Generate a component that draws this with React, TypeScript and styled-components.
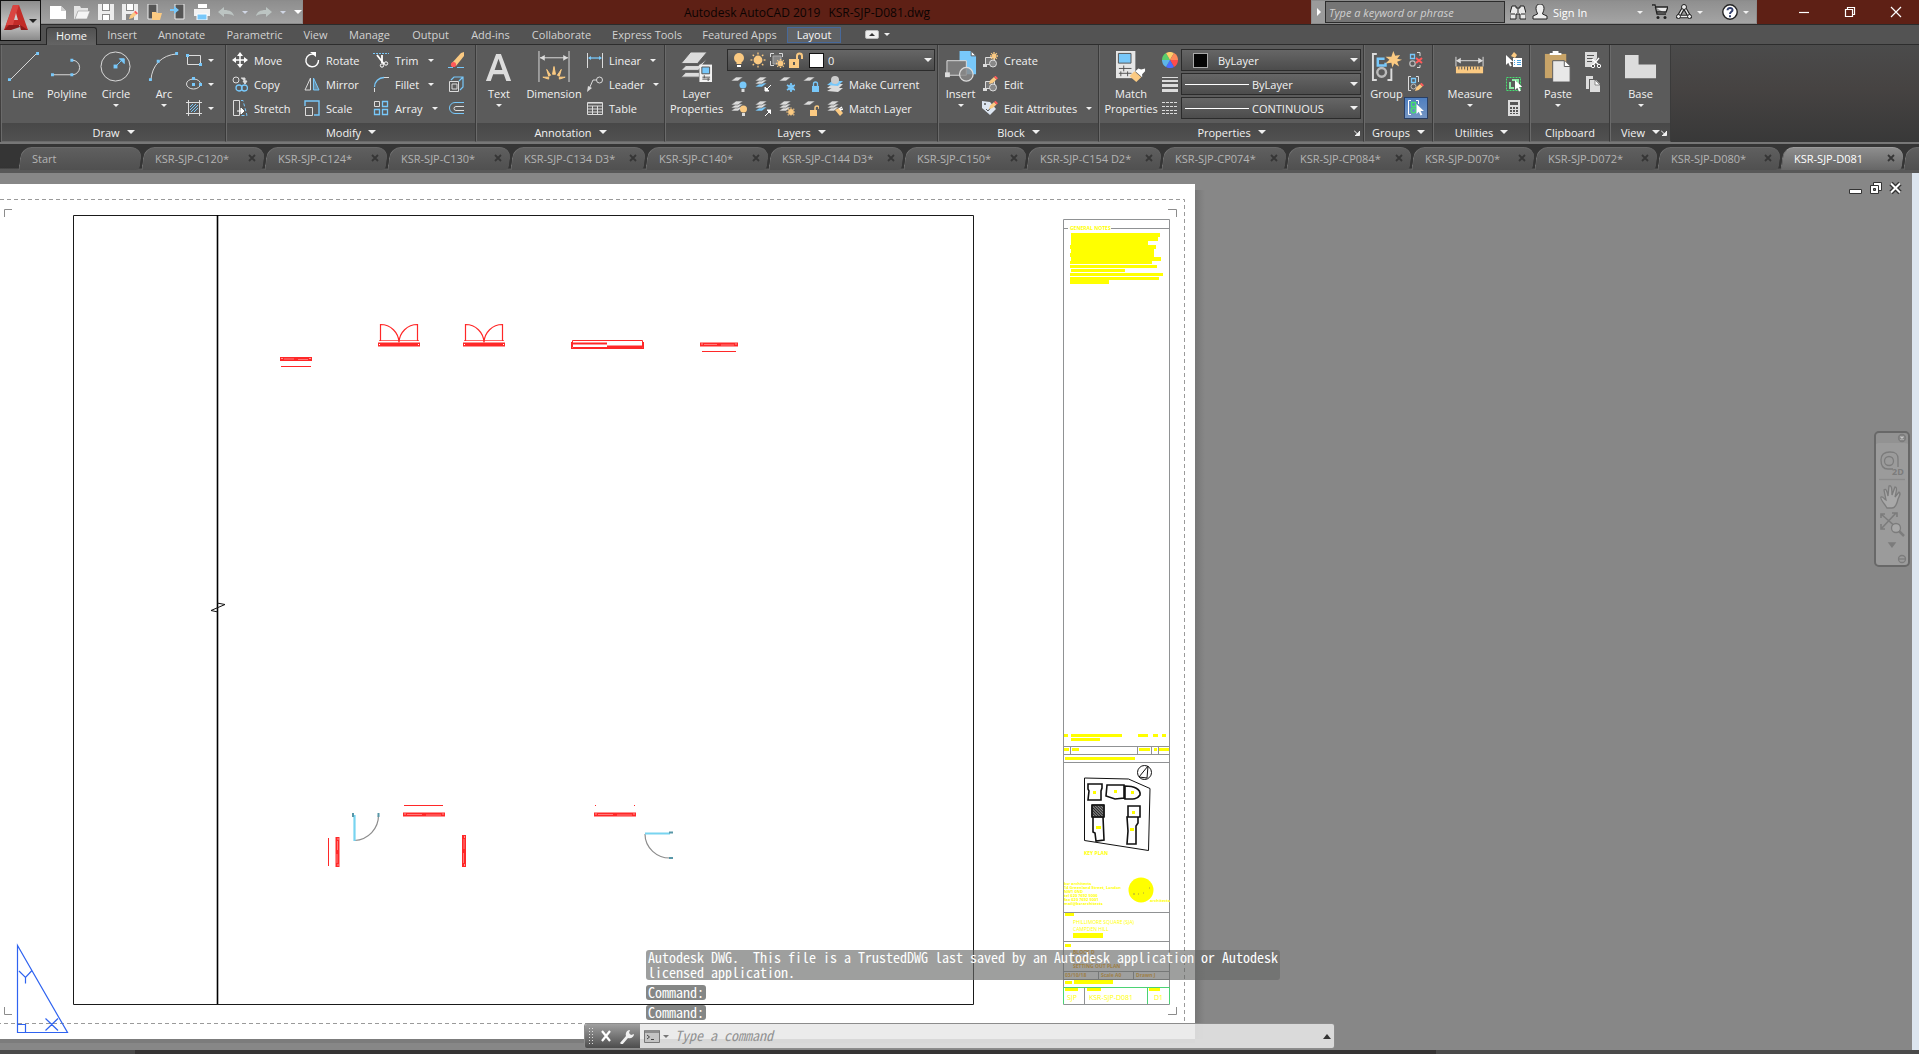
import React from 'react';
import styled, { createGlobalStyle, css } from 'styled-components';

const L = '#dcdcdc';
const B = '#78c8fa';
const O = '#fbca82';
const R = '#ff5a5a';
const UI = '"Open Sans", "Noto Sans", sans-serif';
const MONO = '"Noto Sans Mono CJK SC", "DejaVu Sans Mono", "Liberation Mono", monospace';

const Global = createGlobalStyle`
  *, *::before, *::after { box-sizing: border-box; }
  html, body, #root { height: 100%; }
  body { margin: 0; overflow: hidden; background: #8a8a8a; font-family: ${UI}; font-size: 11px; color: #f2f2f2; }
  button, input, select { font: inherit; color: inherit; }
  button { border: 0; padding: 0; background: none; }
  svg { display: block; flex: none; }
`;

/* ---------- icons ---------- */

const sheets = (x: number, y: number, n: number, last = L) => (
  <>
    {Array.from({ length: n }, (_, i) => {
      const k = n - 1 - i;
      return <path key={k} d={`M${x} ${y + 5 + k * 3}l5-4h7l-5 4z`} fill={k === n - 1 ? last : L} stroke="#5b5b5b" strokeWidth=".6" />;
    })}
  </>
);
const pencil = (x: number, y: number) => (
  <g transform={`translate(${x} ${y})`}>
    <path d="M0 8l1.2-3.5L5 1l2.5 2.5L3.700 7z" fill={O} />
    <path d="M5 1l1.500-1.300 2.500 2.600L7.500 3.500z" fill={R} />
  </g>
);
const sun = (x: number, y: number, r: number) => (
  <g stroke={O} strokeWidth="1.300" fill={O}>
    <circle cx={x} cy={y} r={r * 0.5} />
    {[0, 45, 90, 135, 180, 225, 270, 315].map(a => (
      <path key={a} d={`M${x} ${y - r * 0.75}V${y - r}`} transform={`rotate(${a} ${x} ${y})`} />
    ))}
  </g>
);
const arrowCursor = (x: number, y: number) => (
  <path transform={`translate(${x} ${y})`} d="M0 0v10l2.300-2.200 1.700 3.700 1.800-.8-1.700-3.600h3.300z" fill="#fff" />
);
const shapes = (
  <>
    <path d="M3.500 5.500h9v7h-9z" fill="#777" stroke={L} />
    <path d="M1 12h4v3H1z" fill={L} />
    <circle cx="11" cy="11.500" r="3.500" fill="#888" stroke={L} />
  </>
);

const ART: Record<string, React.ReactNode> = {
  line: <><path d="M3 30L30 3" stroke={L} /><path d="M1 28h3v3H1zM30 1h3v3h-3z" fill={B} /></>,
  polyline: <><path d="M2 24.500h20a7 7 0 0 0 0-15" stroke={L} fill="none" /><path d="M0 23h3v3H0zM20 23h3v3h-3zM20 8h3v3h-3z" fill={B} /></>,
  circle: <><circle cx="16" cy="16" r="15" stroke={L} fill="none" /><path d="M16 16l7-7M20 8h5v5z" stroke={B} fill={B} /><path d="M14 14h4v4h-4z" fill={B} /></>,
  arc: <><path d="M3 30C4 15 14 4 30 3" stroke={L} fill="none" /><path d="M1 28h3v3H1zM9 9h3v3H9zM28 1h3v3h-3z" fill={B} /></>,
  rect: <><path d="M1.500 3.500h13v9h-13z" stroke={L} fill="none" /><path d="M0 2h3v3H0zM13 11h3v3h-3z" fill={B} /></>,
  ellipse: <><ellipse cx="7.500" cy="8" rx="7" ry="5" stroke={L} fill="none" /><path d="M6 7h3v3H6zM6 1h3v3H6zM13 7h3v3h-3z" fill={B} /></>,
  hatch: <><path d="M2.500 0v16M13.500 0v16M0 2.500h16M0 13.500h16" stroke={L} /><path d="M4 7l3-3M4 10l6-6M5 12l7-7M8 12l4-4" stroke={B} /></>,
  move: <><path d="M8 2v12M2 8h12" stroke="#fff" strokeWidth="1.500" /><path d="M8 0l3 4H5zM8 16l3-4H5zM0 8l4-3v6zM16 8l-4-3v6z" fill="#fff" /></>,
  copy: <><circle cx="4" cy="4" r="3" stroke={L} fill="none" /><path d="M9 2h4v4M11 5h4l-2 3z" stroke={L} fill={L} /><circle cx="7" cy="12" r="3" stroke={B} fill="none" strokeWidth="1.300" /><circle cx="12.500" cy="12" r="3" stroke={B} fill="none" strokeWidth="1.300" /></>,
  stretch: <><path d="M1.500.5h6v15h-6z" stroke={L} fill="none" /><path d="M9 .5h2l4 15H9" stroke={B} fill="none" strokeDasharray="3 2" /><path d="M5 11h5M9 8l3 3-3 3z" stroke="#fff" fill="#fff" /></>,
  rotate: <><path d="M10.500 2.600A6.300 6.300 0 1 0 14.500 8" stroke="#fff" fill="none" strokeWidth="1.400" /><path d="M6 0h6v5z" fill="#fff" /></>,
  mirror: <><path d="M6.500 2v12H1z" stroke={L} fill="none" /><path d="M9.500 2v12H15z" stroke={B} fill={B} fillOpacity=".45" /></>,
  scale: <><path d="M1 6V1h14v14h-5" stroke={B} fill="none" strokeWidth="1.400" /><path d="M1.500 7.500h7v8h-7z" stroke={L} fill="none" /></>,
  trim: <><path d="M0 1.500h16" stroke={B} strokeDasharray="2 1" /><path d="M4 3l7 9M9 3l0 8" stroke="#fff" strokeWidth="1.800" /><circle cx="9" cy="13.500" r="1.700" stroke="#fff" fill="none" /><circle cx="13" cy="11.500" r="1.700" stroke="#fff" fill="none" /></>,
  fillet: <><path d="M1.500 16v-4M11 1.500h5" stroke={L} /><path d="M1.500 11A9.500 9.500 0 0 1 11 1.500" stroke={B} fill="none" strokeWidth="1.300" /></>,
  array: <><path d="M1.500 1.500h5v5h-5z" stroke={L} fill="none" /><path d="M9.500 1.500h5v5h-5zM1.500 9.500h5v5h-5zM9.500 9.500h5v5h-5z" stroke={B} fill="none" strokeWidth="1.300" /></>,
  erase: <><path d="M0 15.500h5M9 15.500h7" stroke={B} /><path d="M4 11L13 1l3-1v4L8 14z" fill={O} /><circle cx="5.500" cy="12.500" r="2.600" fill={R} /></>,
  explode: <><path d="M1.500 5.500h9v10h-9zM4 8h5v5H4z" stroke={L} fill="none" /><path d="M3 4l3-3h9v10l-3 3M11 5l4-4" stroke={B} fill="none" strokeWidth="1.200" /></>,
  offset: <><path d="M16 2.500H7a5.500 5.500 0 0 0 0 11h9" stroke={B} fill="none" /><path d="M16 6.500H8a2 2 0 0 0 0 4h8" stroke={L} fill="none" /></>,
  text: <path d="M3 31L13.500 3h5L29 31h-5l-2.500-7h-11L8 31zM12 19.500h8L16 8z" fill={L} fillRule="evenodd" />,
  dimension: <><path d="M1 0v32M32 0v32M2 7h29" stroke={L} /><path d="M2 7l5-3v6zM31 7l-5-3v6z" fill={L} /><path d="M16.500 16l1.500 8h-3zM9 19l4 6-2 1zM24 19l-4 6 2 1zM5 27l6 0v2zM28 27h-6v2z" fill={O} stroke={O} /></>,
  linear: <><path d="M.5 1v15M15.500 1v15" stroke={L} /><path d="M2 6h12" stroke={B} strokeWidth="1.300" /><path d="M1 6l3-2v4zM15 6l-3-2v4z" fill={B} /></>,
  leader: <><circle cx="12.500" cy="4" r="3" stroke={L} fill="none" /><path d="M9.500 4H6L2 13" stroke={L} fill="none" /><path d="M0 16l1-6 4 2z" fill={L} /></>,
  table: <><path d="M.5 2.500h15v12H.5zM.5 6h15M.5 9h15M.5 12h15M5.500 6v8M10.500 6v8" stroke={L} fill="none" /><path d="M1 2h14v2H1z" fill={L} opacity=".6" /></>,
  layers: <><path d="M0 13L10 1h17L17 13zM0 20l5-5h13l9-7-9 12zM0 27l5-5h14v5z" fill={L} stroke="#5b5b5b" /><path d="M19 14h13v18H19z" fill="#f2f2f2" /><path d="M21.500 16.500h8v7h-8z" fill={B} stroke="#555" /><path d="M22 27h8M22 29h8M24 25v3M28 28v3" stroke="#555" /></>,
  layOff: <>{sheets(0, 0, 1)}<circle cx="12" cy="9" r="3.500" fill={B} /><path d="M10.500 13h3v3h-3z" fill={L} /></>,
  layIso: <>{sheets(0, 0, 3, B)}<path d="M16 9l-5 5M10 11v4h4z" stroke="#fff" fill="#fff" /></>,
  layFreeze: <>{sheets(0, 0, 1)}<path d="M12 7v9M8 9l8 5M16 9l-8 5" stroke={B} strokeWidth="1.700" /><circle cx="12" cy="11.500" r="2.700" stroke={B} fill="none" /></>,
  layLock: <>{sheets(0, 0, 1)}<path d="M9 10h7v6H9z" fill={B} /><path d="M10.500 10V8a2 2 0 0 1 4 0v2" stroke={B} fill="none" strokeWidth="1.300" /></>,
  makeCurrent: <><path d="M0 15l5-3h11l-5 4zM0 12l5-4h11l-5 5z" fill={L} /><path d="M0 9l5-4h11l-5 5z" fill={B} /><circle cx="8" cy="4" r="4" fill="#ccc" /></>,
  layOn: <>{sheets(0, 0, 3)}<circle cx="12.500" cy="9" r="3.500" fill={O} /><path d="M11 13h3v3h-3z" fill={L} /></>,
  layUniso: <>{sheets(0, 0, 3, B)}<path d="M10 16l5-5M12 10h4v4z" stroke="#fff" fill="#fff" /></>,
  layThaw: <>{sheets(0, 0, 3)}{sun(12, 12, 4.5)}</>,
  layUnlock: <>{sheets(0, 0, 1)}<path d="M7 10h7v6H7z" fill={O} /><path d="M12 10V8a2 2 0 0 1 4 0v1" stroke={O} fill="none" strokeWidth="1.500" /></>,
  matchLayer: <>{sheets(0, 0, 3)}<path d="M8 10l4-2 4 5-3 3z" fill={O} /><path d="M12 9l3-2M13 10l3-1" stroke="#fff" strokeWidth="1.500" /></>,
  bulb: <><circle cx="8" cy="6" r="5" fill={O} /><path d="M5.500 10h5v2h-5z" fill={O} /><path d="M6 13h4v2H6z" fill="#fff" /></>,
  sun: sun(8, 8, 7.5),
  vp: <><path d="M1.500 5V1.500H5M10 1.500h3.500V5M1.500 9v4.500H5" stroke={L} fill="none" /><path d="M4 4h8v8H4z" fill="#858585" stroke="#aaa" />{sun(11.5, 11.5, 4.5)}</>,
  unlock: <><path d="M1 7h10v9H1z" fill={O} /><path d="M9 8V4a2.500 2.500 0 0 1 5 0v3" stroke={O} strokeWidth="2" fill="none" /><path d="M5 10h2v3H5z" fill="#555" /></>,
  insert: <><path d="M15 0h12l5 5v19H15z" fill={B} /><path d="M27 0l5 5h-5z" fill="#fff" stroke="#5b5b5b" /><path d="M2 10h20v15H2z" fill="#7b7b7b" stroke={L} /><path d="M0 22h5v5H0z" fill={L} /><circle cx="22" cy="24" r="7" fill="#888" fillOpacity=".8" stroke={L} strokeWidth="1.300" /></>,
  create: <>{shapes}{sun(12, 4, 4)}</>,
  edit: <>{shapes}{pencil(7, 0)}</>,
  editAttr: <><path d="M0 1l8 1 6 7-6 6-8-7z" fill="#dde6f2" /><circle cx="3" cy="4" r="1" fill="#555" /><path d="M4 9l2 2 4-5" stroke="#555" fill="none" />{pencil(7, 1)}</>,
  matchProps: <><path d="M1 0h20v28H1z" fill="#e6e6e6" /><path d="M3.500 2.500h13v10h-13z" fill={B} stroke="#555" /><path d="M4 18h13M4 23h13M9 15v6M6 21v5M13 21v5" stroke="#555" /><path d="M15 26l5-5 7 6-5 5z" fill={O} /><path d="M21 21l3-3 3 1 4-1v3l-3 3v3z" fill="#fff" /></>,
  wheel: <>{['#5acd6c', '#ffcf6b', '#ff8a5a', '#ff4c4c', '#4a6dff', '#5db6e8'].map((c, i) => <path key={c} d="M8 8V0a8 8 0 0 1 6.930 4z" fill={c} transform={`rotate(${i * 60 - 90} 8 8)`} />)}</>,
  weights: <path d="M0 1h16v1H0zM0 4h16v2H0zM0 8h16v3H0zM0 13h16v3H0z" fill={L} />,
  types: <path d="M0 2.500h16M0 6.500h16M0 10.500h16M0 13.500h16" stroke={L} strokeDasharray="3 1" />,
  group: <><path d="M6 3H2v27h4M17 30h4V18" stroke={L} strokeWidth="2" fill="none" /><path d="M14 8H7v7h8v-3" stroke={B} strokeWidth="2.500" fill="none" /><circle cx="11" cy="22" r="4.500" stroke="#bbb" strokeWidth="2.500" fill="none" /><path d="M23 0l2 5 5-1-3 4 5 1-5 2 2 5-5-3-2 4-1-5-6 1 4-4-4-3h6z" fill={O} /></>,
  ungroup: <><path d="M2.500 2.500h4v4h-4z" stroke={B} fill="none" strokeWidth="1.300" /><circle cx="4.500" cy="11.500" r="2.700" stroke="#bbb" fill="none" strokeWidth="1.300" /><path d="M9 .5h3V4M9 15.500h3V13" stroke={L} fill="none" /><path d="M8 6l6 5M14 6l-6 5" stroke={R} strokeWidth="2" /></>,
  groupEdit: <><path d="M3 .5H.500v14H3M8 .5h2.500V6" stroke={L} fill="none" /><path d="M3.500 2.500h4v4h-4z" stroke={B} fill="none" strokeWidth="1.300" /><circle cx="5.500" cy="10.500" r="2.500" stroke="#bbb" fill="none" />{pencil(7, 7)}</>,
  groupSel: <><path d="M3 .5H.500v14H3M8 .5h2.500V4" stroke="#fff" fill="none" /><path d="M3.500 2.500h4v4h-4z" stroke="#45e070" fill="none" strokeWidth="1.300" /><circle cx="5.500" cy="10.500" r="2.300" stroke="#45e070" fill="none" strokeWidth="1.300" />{arrowCursor(8.5, 4)}</>,
  measure: <><path d="M2 6v10M30 6v10M3 10h26" stroke={L} /><path d="M2 10l5-3v6zM30 10l-5-3v6z" fill={L} /><path d="M2 16h28v7H2z" fill={O} /><path d="M5 16v3M8 16v3M11 16v3M14 16v4M17 16v3M20 16v3M23 16v3M26 16v3" stroke="#555" /></>,
  quick: <>{arrowCursor(0, 3)}<path d="M8 0l3 3-2 3-4-2z" fill={O} /><path d="M7 6h9v9H7z" fill="#fff" /><path d="M8 8.500h1M11 8.500h4M8 10.500h1M11 10.500h4M8 12.500h1M11 12.500h4" stroke="#4aa3e0" /></>,
  selectAll: <><path d="M.5 1.500h14v13H.5z" stroke="#45e070" strokeDasharray="2 1" fill="none" /><path d="M6 4h6v4M4 6v6h4" stroke="#8be8a4" strokeWidth="2" fill="none" />{arrowCursor(9, 4)}</>,
  calc: <><path d="M2 0h12v16H2z" fill={L} /><path d="M4 2h8v3H4zM4 7h2v2H4zM7 7h2v2H7zM10 7h2v2h-2zM4 10h2v2H4zM7 10h2v2H7zM10 10h2v2h-2zM4 13h2v1H4zM7 13h2v1H7zM10 13h2v1h-2z" fill="#555" /></>,
  paste: <><path d="M3 3h22v25H3z" fill="#c8a468" /><path d="M8 4V2h3V0h6v2h3v2z" fill="#fff" /><path d="M11 10h12l6 6v16H11z" fill="#e8e8e8" stroke="#5b5b5b" /><path d="M23 10v6h6" fill="#fff" stroke="#5b5b5b" /></>,
  cut: <><path d="M0 0h12v6l-4 9H0z" fill={L} /><path d="M2 3.500h7M2 6.500h6M2 9.500h5" stroke="#555" /><path d="M7 7l7 6M14 6l-6 7" stroke="#fff" strokeWidth="1.300" /><circle cx="8" cy="14" r="1.700" fill="#555" stroke="#fff" /><circle cx="14" cy="14" r="1.700" fill="#555" stroke="#fff" /></>,
  copyClip: <><path d="M1 0h7v3H4v10H1z" fill={L} /><path d="M5 4h6l4 4v8H5z" fill={L} /><path d="M10 4l5 5h-5z" fill="#fff" stroke="#666" strokeWidth=".7" /></>,
  base: <path d="M0 4h14v10h18v14H0z" fill={L} />,
  newDoc: <><path d="M0 2h11l5 5v8H0z" fill="#fff" /><path d="M11 2l5 5h-5z" fill="#ccc" /></>,
  open: <><path d="M0 2h6l1 2h7v3H4L1 15H0z" fill="#e4e4e4" /><path d="M4 7h12l-3 8H1z" fill="#f4f4f4" stroke="#999" strokeWidth=".6" /></>,
  save: <><path d="M0 0h16v16H0z" fill="#ececec" /><path d="M4 0h8v7H4zM4 10h8v6H4z" fill="#888" /><path d="M5 0h6v6H5zM5 11h6v5H5z" fill="#fff" /></>,
  saveAs: <><path d="M0 0h16v16H0z" fill="#ececec" /><path d="M4 0h8v7H4zM4 10h8v6H4z" fill="#888" /><path d="M5 0h6v6H5z" fill="#fff" />{pencil(7, 7)}</>,
  openWeb: <><path d="M2 0h9v15H2z" fill="#555" stroke="#eee" /><path d="M6 8h4l1 1h5l-2 7H6z" fill={O} /></>,
  saveWeb: <><path d="M5 0h9v15H5z" fill="#555" stroke="#eee" /><path d="M0 5h4V2l5 4-5 4V7H0z" fill={B} /></>,
  print: <><path d="M4 0h9v4H4z" fill="#fff" /><path d="M0 5h16v7H0z" fill="#f2f2f2" /><path d="M3 10h10v6H3z" fill={B} stroke="#fff" /></>,
  undo: <path d="M0 8l6-5v3c6 0 9 2 10 6-3-2-6-2-10-2v3z" fill="#bcc4c2" />,
  redo: <path d="M16 8l-6-5v3C4 6 1 8 0 12c3-2 6-2 10-2v3z" fill="#bcc4c2" />,
  binoc: <><path d="M2 2h4v2h4V2h4l2 7v6h-6v-5H6v5H0V9z" fill="#e9e9e9" stroke="#222" /><path d="M1 10h4M11 10h4M8 4v5" stroke="#222" /></>,
  user: <path d="M8 0c3 0 4 2 4 4.500S10.500 9 10.500 10L15 12v3H1v-3l4.500-2C5.500 9 4 7 4 4.500S5 0 8 0z" fill="#eee" stroke="#222" />,
  cart: <><path d="M0 1h3l2 9h9M4 3h12l-2 5H5" stroke="#222" fill="#e9e9e9" strokeWidth="1.300" /><circle cx="6" cy="13.500" r="1.500" fill="#222" /><circle cx="13" cy="13.500" r="1.500" fill="#222" /></>,
  apps: <><path d="M8 3L2.500 12.500h11z" stroke="#222" strokeWidth="3.600" fill="none" /><path d="M8 3L2.500 12.500h11z" stroke="#eee" strokeWidth="1.400" fill="none" /><circle cx="8" cy="3" r="2.500" fill="#eee" stroke="#222" /><circle cx="2.500" cy="12.500" r="2" fill="#eee" stroke="#222" /><circle cx="13.500" cy="12.500" r="2" fill="#eee" stroke="#222" /></>,
  help: <><circle cx="8" cy="8" r="7.200" fill="#fff" stroke="#222" strokeWidth="1.400" /><path d="M5.500 6.300C5.500 3 10.800 3.200 10.500 6.200 10.300 7.800 8 8 8 10M8 11.300v2" stroke="#33406e" strokeWidth="2" fill="none" /></>,
  min: <path d="M3 8.500h10" stroke="#fff" strokeWidth="1.200" />,
  restore: <path d="M3.500 5.500h7v7h-7zM5.500 5V3.500H12.500V10.500H11" stroke="#fff" fill="none" strokeWidth="1.200" />,
  close: <path d="M3 3l10 10M13 3L3 13" stroke="#fff" strokeWidth="1.200" />,
  vmin: <path d="M1.500 9.500h12v4h-12z" fill="#fff" stroke="#333" />,
  vrestore: <><path d="M5.500 2.500h8v8h-8z" fill="#fff" stroke="#333" /><path d="M2.500 5.500h8v8h-8z" fill="#fff" stroke="#333" /><path d="M5.500 8.500h2v2h-2z" fill="#777" stroke="#333" /></>,
  vclose: <><path d="M3 3.500l9 9M12 3.500l-9 9" stroke="#333" strokeWidth="4.600" /><path d="M3 3.500l9 9M12 3.500l-9 9" stroke="#fff" strokeWidth="2" /></>,
  wrench: <path d="M2 15l6-7C7 5 9 2 12 2l-1 3 2 2 3-1c0 3-3 5-6 4l-6 7z" fill="#f0f0f0" />,
  prompt: <><path d="M.5 2.500h15v12H.500z" stroke="#777" fill="#c4c4c4" /><path d="M1 2h14v3H1z" fill="#8c8c8c" /><path d="M3 7l2.500 2L3 11M7 11.500h3" stroke="#444" fill="none" /></>,
};

const Icon = ({ name, size = 16 }: { name: string; size?: number }) => (
  <svg width={size} height={size} viewBox={size === 32 ? '0 0 33 33' : '0 0 16 16'} aria-hidden="true">{ART[name]}</svg>
);

const Caret = styled.span<{ $w?: number; $c?: string }>`
  width: 0; height: 0; flex: none;
  border: ${p => p.$w ?? 3}px solid transparent;
  border-top-color: ${p => p.$c ?? '#f0f0f0'};
  border-bottom: 0;
`;

/* ---------- frame ---------- */

const Shell = styled.div`
  height: 100vh; display: flex; flex-direction: column; position: relative;
`;
const TitleBar = styled.header`
  height: 24px; flex: none; display: flex; align-items: stretch; background: #5e2015;
`;
const QuickAccess = styled.div`
  width: 262px; margin-left: 41px; padding-left: 9px; display: flex; align-items: center; gap: 8px;
  background: linear-gradient(#8e8e8e, #a2a2a2); border: 1px solid #8c8c8c; border-left: 0;
  button { display: flex; }
`;
const AppTitle = styled.h1`
  flex: 1; margin: 0; display: flex; justify-content: center; align-items: center; gap: 8px;
  font-size: 12px; font-weight: 400; color: #0c0403;
`;
const InfoBar = styled.div`
  width: 446px; display: flex; align-items: center; background: linear-gradient(#8f8f8f, #a4a4a4); border: 1px solid #8c8c8c;
  button { display: flex; align-items: center; }
`;
const Expand = styled.button`
  width: 13px; height: 100%; justify-content: center; background: #9b9b9b;
  &::after { content: ''; border: 4px solid transparent; border-left-color: #fff; border-right: 0; }
`;
const Search = styled.input`
  width: 180px; height: 22px; padding: 0 3px; border: 1px solid #2c2c2c; border-radius: 0; background: #757575; outline: 0;
  font-style: italic; &::placeholder { color: #d0d0d0; opacity: 1; }
`;
const InfoItem = styled.button<{ $w: number }>`
  width: ${p => p.$w}px; gap: 5px; color: #fff;
`;
const WindowButtons = styled.div`
  flex: none; width: 162px; display: flex; padding-left: 24px;
  button { width: 46px; display: flex; align-items: center; justify-content: center; }
`;
const Logo = styled.button`
  position: absolute; left: 0; top: 0; width: 41px; height: 41px; display: flex; align-items: center;
  border: 1px solid #111; background: linear-gradient(#8d8d8d, #c4c4c4 60%, #8a8a8a); z-index: 2;
`;

const RibbonTabs = styled.nav`
  height: 21px; flex: none; display: flex; align-items: stretch; padding-left: 46px;
  background: #535353; border-top: 1px solid #2b2b2b; border-bottom: 1px solid #2d2d2d;
`;
const RibbonTab = styled.button<{ $w: number; $state?: string }>`
  width: ${p => p.$w}px; flex: none; white-space: nowrap; color: #d2d2d2; line-height: 18px;
  ${p => p.$state === 'on' && css`background: linear-gradient(#515151, #646464); color: #f8f8f8; border: 1px solid #262626; border-bottom: 0; border-radius: 3px 3px 0 0; margin: 2px 0 -1px; line-height: 14px; padding-bottom: 2px;`}
  ${p => p.$state === 'hot' && css`background: #5f6265; color: #f8f8f8; border: 1px solid #48699a; margin: 2px 0 1px; line-height: 14px;`}
`;
const Pill = styled.span`
  display: flex; width: 14px; height: 9px; align-items: center; justify-content: center; background: #eee; border-radius: 2px; border: 1px solid #bbb;
  &::after { content: ''; border: 3px solid transparent; border-top: 0; border-bottom-color: #333; }
`;
const PillButton = styled.button`
  display: flex; align-items: center; gap: 5px; margin-left: 24px;
`;

const Ribbon = styled.div`
  height: 99px; flex: none; display: flex; padding-left: 1px;
  background: linear-gradient(#4b4b4b, #464342 45%, #383838); border-bottom: 2px solid #777;
`;
const PanelBox = styled.section<{ $w: number }>`
  width: ${p => p.$w}px; flex: none; display: flex; flex-direction: column;
  background: #5b5b5b; border: 1px solid #6a6a6a; border-right-color: #3a3a3a; border-top: 0;
`;
const PanelBody = styled.div<{ $pad?: number }>`
  flex: 1; display: flex; padding: 3px 0 0 ${p => p.$pad ?? 0}px;
`;
const PanelTitle = styled.button`
  height: 18px; display: flex; align-items: center; justify-content: center; gap: 7px; color: #f2f2f2;
  background: linear-gradient(#484848, #515151); position: relative;
`;
const LauncherArt = styled.svg`
  position: absolute; right: 3px; bottom: 5px;
`;
const Big = styled.button<{ $w: number }>`
  width: ${p => p.$w}px; flex: none; display: flex; flex-direction: column; align-items: center; padding-top: 3px; align-self: flex-start;
  line-height: 15px; white-space: pre-line; text-align: center;
  svg { margin-bottom: 3px; } ${Caret} { margin-top: 3px; }
`;
const Stack = styled.div<{ $w: number }>`
  width: ${p => p.$w}px; flex: none; display: flex; flex-direction: column; button { height: 24px; }
`;
const Small = styled.button<{ $tight?: boolean }>`
  display: flex; align-items: center; gap: 6px; white-space: nowrap; font-size: 11px;
  ${Caret} { margin-left: ${p => (p.$tight ? 0 : 3)}px; }
`;
const SelectedTool = styled.button`
  && { height: 22px; }
  width: 24px; margin: 1px 0 0 -4px; display: flex; align-items: center; justify-content: center;
  background: linear-gradient(#4f7fc0, #7596c4); border: 1px solid #2a3f63;
`;
const IconRow = styled.div<{ $pad?: number }>`
  display: flex; height: 24px; align-items: center; gap: 8px; padding-left: ${p => p.$pad ?? 0}px;
  button { display: flex; align-items: center; }
`;
const Combo = styled.label<{ $w: number }>`
  position: relative; width: ${p => p.$w}px; height: 22px; display: flex; align-items: center; gap: 3px; padding-left: 3px;
  background: linear-gradient(#666, #4c4c4c); border: 1px solid #2b2b2b;
  select { flex: 1; min-width: 0; height: 20px; appearance: none; border: 0; background: transparent; outline: 0; padding: 0 16px 0 0; }
  ${Caret} { position: absolute; right: 2px; top: 8px; }
`;
const Swatch = styled.span<{ $c: string; $wide?: boolean }>`
  width: 15px; height: 15px; flex: none; background: ${p => p.$c}; border: 1px solid ${p => (p.$wide ? '#aaa' : '#111')};
  margin: ${p => (p.$wide ? '0 7px 0 8px' : '0 1px 0 2px')};
`;
const Stroke = styled.span`width: 64px; height: 1px; flex: none; background: #fff;`;

const DocTabs = styled.nav`
  height: 29px; flex: none; display: flex; align-items: flex-start; padding: 3px 0 0 20px; overflow: hidden;
  background: linear-gradient(#353535 0 22px, #333 24px, #585858 25px);
`;
const DocTab = styled.div<{ $w: number; $on?: boolean }>`
  position: relative; width: ${p => p.$w}px; flex: none; height: 23px; display: flex; align-items: center; padding: 0 10px 1px 12px;
  color: ${p => (p.$on ? '#fff' : '#b4b4b4')};
  > * { position: relative; }
  &::before {
    content: ''; position: absolute; inset: 0 2px 0 0; border-radius: 10px 12px 4px 0; transform: skewX(-8deg);
    background: ${p => (p.$on ? 'linear-gradient(#8d8d8d, #666)' : 'linear-gradient(#5f5f5f, #505050)')};
    border-top: 1px solid ${p => (p.$on ? '#9c9c9c' : '#6a6a6a')}; border-left: 1px solid #727272;
  }
  button { color: inherit; padding: 0; white-space: nowrap; }
`;
const TabClose = styled.button`
  margin-left: auto; width: 8px; height: 8px; svg { width: 8px; height: 8px; }
`;

/* ---------- drawing area ---------- */

const Canvas = styled.main`
  flex: 1; min-height: 0; position: relative; overflow: hidden; background: #878787; border-right: 7px solid #dce5ef;
`;
const Drawing = styled.svg`position: absolute; left: 0; top: 0;`;
const ViewButtons = styled.div`
  position: absolute; right: 8px; top: 7px; display: flex; gap: 4px; button { display: flex; }
`;
const NavBar = styled.div`
  position: absolute; right: 2px; top: 258px; width: 36px; height: 136px; border: 2px solid #686868; border-radius: 5px; background: #9b9b9b;
  box-shadow: inset 0 12px 0 -2px #929292;
`;
const CommandArea = styled.div`
  position: absolute; left: 584px; bottom: 1px; width: 751px; display: flex; flex-direction: column; align-items: flex-start;
  font-family: ${MONO}; font-size: 14px; line-height: 15px; color: #fff;
`;
const History = styled.p<{ $wide?: boolean }>`
  margin: 0 0 5px 62px; padding: 0 2px; width: ${p => (p.$wide ? '634px' : 'auto')}; white-space: pre-wrap;
  background: rgba(103, 105, 104, ${p => (p.$wide ? 0.64 : 0.8)}); border-radius: 3px;
`;
const CommandBar = styled.div`
  align-self: stretch; display: flex; height: 26px; border-radius: 3px; overflow: hidden; border: 1px solid #8c8c8c; margin-top: -2px;
`;
const Grip = styled.div`
  width: 55px; display: flex; align-items: center; gap: 6px; padding-left: 3px; background: linear-gradient(#a0a0a0, #4c4c4c);
  &::before { content: ''; width: 6px; height: 18px; background: radial-gradient(circle, #ddd 1px, transparent 1px) 0 0 / 3px 3px; }
  button { display: flex; }
`;
const Entry = styled.label`
  flex: 1; display: flex; align-items: center; padding: 0 3px 0 4px; background: rgba(232, 232, 232, .86);
  input { flex: 1; min-width: 0; border: 0; outline: 0; background: transparent; font-style: italic; padding: 0 0 1px 6px; color: #333; }
  input::placeholder { color: #929292; opacity: 1; }
  ${Caret} { margin-left: 3px; }
`;
const Up = styled.span`border: 4px solid transparent; border-top: 0; border-bottom: 5px solid #333;`;
const StatusEdge = styled.footer`
  height: 4px; flex: none; background: linear-gradient(90deg, #4a4a4a 0 135px, #353333 135px 1436px, #4a4a4a 1436px);
`;

const tabs: [string, number, string?][] = [
  ['Home', 51, 'on'], ['Insert', 50], ['Annotate', 69], ['Parametric', 77], ['View', 45], ['Manage', 63], ['Output', 59],
  ['Add-ins', 61], ['Collaborate', 81], ['Express Tools', 90], ['Featured Apps', 95], ['Layout', 54, 'hot'],
];
const docs: [string, number][] = [
  ['Start', 123], ['KSR-SJP-C120*', 123], ['KSR-SJP-C124*', 123], ['KSR-SJP-C130*', 123], ['KSR-SJP-C134 D3*', 135], ['KSR-SJP-C140*', 123],
  ['KSR-SJP-C144 D3*', 135], ['KSR-SJP-C150*', 123], ['KSR-SJP-C154 D2*', 135], ['KSR-SJP-CP074*', 125], ['KSR-SJP-CP084*', 125],
  ['KSR-SJP-D070*', 123], ['KSR-SJP-D072*', 123], ['KSR-SJP-D080*', 123], ['KSR-SJP-D081', 123],
];

const Panel = ({ title, w, pad, launcher, plain, children }: { title: string; w: number; pad?: number; launcher?: boolean; plain?: boolean; children: React.ReactNode }) => (
  <PanelBox $w={w}>
    <PanelBody $pad={pad}>{children}</PanelBody>
    <PanelTitle>
      {title}{!plain && <Caret $w={4} />}
      {launcher && <LauncherArt width="6" height="6" viewBox="0 0 6 6"><path d="M0 .5l4 4M5.500 1v4.500H1M5 3v2H3z" stroke="#f0f0f0" fill="#f0f0f0" /></LauncherArt>}
    </PanelTitle>
  </PanelBox>
);
const BigTool = ({ icon, label, w, drop }: { icon: string; label: string; w: number; drop?: boolean }) => (
  <Big $w={w}><Icon name={icon} size={32} />{label}{drop && <Caret />}</Big>
);
const Tool = ({ icon, label, drop }: { icon: string; label?: string; drop?: boolean }) => (
  <Small $tight={!label} aria-label={label ? undefined : icon}><Icon name={icon} />{label}{drop && <Caret />}</Small>
);

/* Wall opening: a filled jamb-to-jamb bar with its end blocks and a centre mullion */
const Opening = ({ x, y, len, down }: { x: number; y: number; len: number; down?: boolean }) => (
  <g transform={`translate(${x} ${y})${down ? ' rotate(90)' : ''}`} fill="none">
    <path d={`M0 0h${len}`} stroke="#ff2828" strokeWidth="4" />
    <path d={`M4 0h${len / 2 - 6}M${len / 2 + 2} .500h${len / 2 - 6}`} stroke="#ff8f8f" strokeWidth=".8" />
    <path d={`M1.500-.5h1M${len - 2.5}-.5h1`} stroke="#fff" />
  </g>
);
/* Double casement window seen in plan, left corner of the sill at x,y */
const Casement = ({ x, y }: { x: number; y: number }) => (
  <g transform={`translate(${x} ${y})`} stroke="#ff2828" fill="none">
    <path d="M2.500 17V.5a18.500 18.500 0 0 1 18.500 18A18.500 18.500 0 0 1 39.500.5V17" strokeWidth="1.200" />
    <path d="M1 16.500h40" strokeOpacity=".7" /><path d="M0 20.500h42" strokeWidth="4" />
    <path d="M1 20.500h1M40 20.500h1" stroke="#fff" />
  </g>
);
const bars: number[][] = [
  [1071, 233, 89, 4], [1071, 237, 87, 4], [1071, 241, 77, 4], [1070, 245, 86, 4], [1071, 249, 83, 4], [1070, 253, 84, 4], [1071, 257, 90, 4],
  [1070, 261, 82, 3], [1070, 265, 87, 3], [1071, 269, 54, 3], [1070, 273, 93, 3], [1070, 277, 89, 3], [1070, 280, 39, 4],
  [1064, 734, 4, 3], [1071, 734, 51, 3], [1138, 734, 10, 3], [1153, 734, 5, 3], [1162, 734, 4, 3], [1071, 738, 29, 3],
  [1064, 748, 5, 3], [1072, 748, 7, 3], [1139, 748, 11, 3], [1154, 748, 3, 3], [1159, 748, 10, 3], [1065, 757, 70, 3],
  [1065, 913, 9, 3], [1073, 933, 30, 5], [1065, 944, 6, 3], [1065, 981, 7, 3], [1074, 980, 39, 4],
  [1065, 988, 13, 3], [1087, 988, 14, 3], [1149, 988, 11, 3],
];

const PlanDrawing = () => (
  <Drawing width="1912" height="877" viewBox="0 173 1912 877" role="img" aria-label="KSR-SJP-D081 sheet">
    <defs>
      <linearGradient id="edge"><stop offset="0" stopColor="#777" /><stop offset="1" stopColor="#878787" /></linearGradient>
      <pattern id="poche" width="2" height="2" patternUnits="userSpaceOnUse" patternTransform="rotate(45)"><path d="M0 0h2v1.400H0z" fill="#222" /></pattern>
    </defs>
    <path d="M1195 190h10v849h-10z" fill="url(#edge)" />
    <path d="M0 1039h1195v4H0z" fill="#7c7c7c" />
    <path d="M0 184h1195v855H0z" fill="#fff" />
    <path d="M0 199.500h1184.500V1023.500H0" fill="none" stroke="#9a9a9a" strokeDasharray="4 3" />
    <path d="M4.500 217v-7.500H12M1168 209.500h8.500V217M4.500 1007v7.500H12M1168 1014.500h8.500V1007" fill="none" stroke="#8c8c8c" />
    <path d="M73.500 215.500h900v789h-900z" fill="none" stroke="#1a1a1a" />
    <path d="M217.500 215v789" stroke="#000" strokeWidth="1.600" />
    <path d="M217 603l8 1.500-14 6 7 1.500" fill="none" stroke="#111" />

    <Opening x={280} y={359} len={32} /><Opening x={700} y={344.5} len={38} />
    <Opening x={403} y={814.5} len={42} /><Opening x={594} y={814.5} len={42} />
    <Opening x={337.5} y={837} len={30} down /><Opening x={464} y={835} len={32} down />
    <g stroke="#ff2828" fill="none">
      <path d="M281 366.500h30M702 351.500h34M404 805.500h39M328.500 838v28M595 805.500h1M634 805.500h1" />
      <path d="M572.500 340.500h70v7h-70z" /><path d="M571 343.500h36M607 346.500h37" strokeWidth="2" /><path d="M571 348.500h73" /><path d="M571.500 342v7M643.500 342v7" />
    </g>
    <Casement x={378} y={324} /><Casement x={463} y={324} />
    <g fill="none">
      <path d="M378.500 815a25 25 0 0 1-24 25.500M645 834a25 24 0 0 0 26 24" stroke="#8c8c8c" strokeWidth="1.200" />
      <path d="M354.500 815v26M645 833.500h25" stroke="#78d4f0" strokeWidth="2.200" />
      <path d="M353 813v4M378.500 813v4M669 832.500h4M669 858h4" stroke="#5897a8" strokeWidth="2" />
    </g>

    <g fill="none" stroke="#909294">
      <path d="M1063.500 219.500h106v785h-106zM1063 228.500h5M1111 228.500h58M1063 746.500h106M1063 754.500h106M1063 762.500h106M1063 912.500h106M1063 941.500h106M1063 971.500h106M1063 979.500h106M1063 987.500h106M1070.500 747v7M1137.500 747v7M1151.500 747v7M1158.500 747v7M1098.500 971v8M1133.500 971v8M1084.500 987v17" />
      <path d="M1063.500 1004v-16.500h106V1004M1147.500 987v17" stroke="#4bd374" />
    </g>
    <g fill="#ff0">{bars.map((b, i) => <rect key={i} x={b[0]} y={b[1]} width={b[2]} height={b[3]} />)}<circle cx="1141" cy="890" r="12.500" /></g>
    <path d="M1133 894h2M1138 894h1M1143 893h1M1149 888h1" stroke="#a8a040" />
    <g fill="#ff0" fontFamily={UI} fontSize="5" fontWeight="700">
      <text x="1070" y="230">GENERAL NOTES</text>
      <text x="1084" y="855">KEY PLAN</text>
      <g fontSize="4">
        <text x="1064" y="885">ksr architects</text><text x="1064" y="889">14 Greenland Street, London</text><text x="1064" y="893">NW1 0ND</text>
        <text x="1064" y="897">tel 020 7692 5000</text><text x="1064" y="901">fax 020 7692 5001</text><text x="1064" y="905">mail@ksrarchitects</text>
      </g>
      <text x="1150" y="902" fontSize="4">architects</text>
      <g fontWeight="400">
        <text x="1073" y="924">PHILLIMORE SQUARE (SJA)</text><text x="1073" y="931">CAMPDEN HILL</text>
        <text x="1067" y="1000" fontSize="7">SJP</text><text x="1089" y="1000" fontSize="7">KSR-SJP-D081</text><text x="1154" y="1000" fontSize="7">D1</text>
      </g>
      <g fill="#ffa800">
        <text x="1073" y="954">BLOCK D</text><text x="1073" y="961">LEVEL 00</text><text x="1073" y="968">SETTING OUT PLAN</text>
        <text x="1065" y="977">03/10/18</text><text x="1101" y="977">Scale A0</text><text x="1136" y="977">Drawn J</text>
      </g>
    </g>
    <g fill="none" stroke="#111">
      <circle cx="1144.500" cy="772.500" r="7" /><path d="M1139 777l9-11-1 12z" />
      <path d="M1084.500 778l44 1 21.500 9.500-1.500 62-64-10z" />
      <path d="M1088 784h14v4l-1 3v9h-13l1-9-1-2zM1107 785h17v13l-9 1-9-3zM1125 786c9 0 16 3 15 9-3 5-9 4-15 4zM1092 805h12v12h-12zM1093 817h10l1 23-8 1-1-8-2-1zM1128 806h12v11h-12zM1127 817h11v6l-2 3v18h-9l1-13z" strokeWidth="1.600" />
      <path d="M1092 805h12v12h-12z" fill="url(#poche)" />
    </g>
    <g fill="#ff0"><path d="M1093 791h3v3h-3zM1114 790h3v3h-3zM1131 791h3v3h-3zM1096 826h5v3h-5zM1132 811h3v3h-3zM1130 828h4v3h-4z" /></g>

    <path d="M17.500 945.500v87h50zM17.500 1024.500h8v8M19 971l6.500 6.500 6-6.500M25.500 977v6.500M45.500 1018.500l12.500 12M58 1018.500l-12.500 12" fill="none" stroke="#2f63f0" strokeWidth="1.200" />
  </Drawing>
);

const NavArt = () => (
  <svg width="32" height="132" viewBox="0 0 32 132" fill="none" stroke="#7c7c7c" strokeWidth="1.300">
    <circle cx="26" cy="5" r="3.500" fill="#858585" /><path d="M24.500 3.500l3 3M27.500 3.500l-3 3" stroke="#c8c8c8" />
    <path d="M3 46.500h26" opacity=".5" />
    <path d="M17 36h-5c-5 0-7-3-7-9s3-8 9-8 8 2 8 7v8" /><circle cx="13" cy="28" r="4.500" />
    <path d="M9 72c-3-4-5-7-4-8 2-1 3 2 5 3l-2-10c2-2 3 1 4 6l1-10c2-1 3 1 3 9l3-8c2 0 2 2 0 10l4-5c2 1 1 3-1 7-1 5-3 9-6 9h-5z" fill="#a8a8a8" />
    <path d="M5 81l16 14M20 80L5 96M5 85v-4h4M16 80h5v4M5 91v5h4" strokeWidth="1.600" /><circle cx="20" cy="95" r="4.500" fill="#a8a8a8" /><path d="M23 98l5 5" strokeWidth="2.500" />
    <path d="M13 110h6l-3 4z" fill="#7c7c7c" /><circle cx="26" cy="126" r="3.500" /><path d="M23 126h6" />
    <text x="16" y="42" fontFamily={UI} fontSize="9" fontWeight="700" fill="#7c7c7c" stroke="none">2D</text>
  </svg>
);

export default function App() {
  return (
    <Shell>
      <Global />
      <Logo aria-label="Application menu">
        <svg width="28" height="38" viewBox="0 0 28 38">
          <path d="M3 28L12 3h6l9 25h-7l-1-5h-8l-1 5z" fill="#c22c28" /><path d="M12 3h6l-3 9-3 11H5z" fill="#e2504b" opacity=".7" />
          <path d="M13 18h4l-2-7z" fill="#d0cfcf" /><path d="M3 28l5-5h10l1 2-9 3zM19 23l8 5h-7z" fill="#8d1b1b" />
        </svg>
        <Caret $w={4} $c="#222" />
      </Logo>
      <TitleBar>
        <QuickAccess>
          {['newDoc', 'open', 'save', 'saveAs', 'openWeb', 'saveWeb', 'print', 'undo'].map(n => <button key={n} aria-label={n}><Icon name={n} /></button>)}
          <Caret $c="#d0d6e4" /><button aria-label="redo"><Icon name="redo" /></button><Caret $c="#d0d6e4" /><Caret $w={4} $c="#fff" />
        </QuickAccess>
        <AppTitle><span>Autodesk AutoCAD 2019</span><span>KSR-SJP-D081.dwg</span></AppTitle>
        <InfoBar>
          <Expand aria-label="Expand" />
          <Search aria-label="Search" placeholder="Type a keyword or phrase" />
          <InfoItem $w={27} aria-label="Find"><span /><Icon name="binoc" /></InfoItem>
          <InfoItem $w={105}><Icon name="user" />Sign In</InfoItem>
          <InfoItem $w={15} aria-label="Account"><Caret /></InfoItem>
          <InfoItem $w={24} aria-label="Store"><Icon name="cart" /></InfoItem>
          <InfoItem $w={46} aria-label="Apps"><Icon name="apps" /><Caret /></InfoItem>
          <InfoItem $w={33} aria-label="Help"><Icon name="help" /><Caret /></InfoItem>
        </InfoBar>
        <WindowButtons>{['min', 'restore', 'close'].map(n => <button key={n} aria-label={n}><Icon name={n} /></button>)}</WindowButtons>
      </TitleBar>

      <RibbonTabs>
        {tabs.map(([t, w, s]) => <RibbonTab key={t} $w={w} $state={s}>{t}</RibbonTab>)}
        <PillButton aria-label="Minimize ribbon"><Pill /><Caret /></PillButton>
      </RibbonTabs>

      <Ribbon>
        <Panel title="Draw" w={225}>
          <BigTool icon="line" label="Line" w={42} /><BigTool icon="polyline" label="Polyline" w={46} /><BigTool icon="circle" label="Circle" w={52} drop /><BigTool icon="arc" label="Arc" w={44} drop />
          <Stack $w={36}><Tool icon="rect" drop /><Tool icon="ellipse" drop /><Tool icon="hatch" drop /></Stack>
        </Panel>
        <Panel title="Modify" w={250} pad={5}>
          <Stack $w={72}><Tool icon="move" label="Move" /><Tool icon="copy" label="Copy" /><Tool icon="stretch" label="Stretch" /></Stack>
          <Stack $w={69}><Tool icon="rotate" label="Rotate" /><Tool icon="mirror" label="Mirror" /><Tool icon="scale" label="Scale" /></Stack>
          <Stack $w={75}><Tool icon="trim" label="Trim" drop /><Tool icon="fillet" label="Fillet" drop /><Tool icon="array" label="Array" drop /></Stack>
          <Stack $w={20}><Tool icon="erase" /><Tool icon="explode" /><Tool icon="offset" /></Stack>
        </Panel>
        <Panel title="Annotation" w={189}>
          <BigTool icon="text" label="Text" w={44} drop /><BigTool icon="dimension" label="Dimension" w={66} />
          <Stack $w={72}><Tool icon="linear" label="Linear" drop /><Tool icon="leader" label="Leader" drop /><Tool icon="table" label="Table" /></Stack>
        </Panel>
        <Panel title="Layers" w={273}>
          <BigTool icon="layers" label={'Layer\nProperties'} w={61} />
          <Stack $w={208}>
            <IconRow><Combo $w={208}><Icon name="bulb" /><Icon name="sun" /><Icon name="vp" /><Icon name="unlock" /><Swatch $c="#fff" /><select aria-label="Layer"><option>0</option></select><Caret $w={4} /></Combo></IconRow>
            <IconRow $pad={4}>{['layOff', 'layIso', 'layFreeze', 'layLock'].map(n => <button key={n} aria-label={n}><Icon name={n} /></button>)}<Tool icon="makeCurrent" label="Make Current" /></IconRow>
            <IconRow $pad={4}>{['layOn', 'layUniso', 'layThaw', 'layUnlock'].map(n => <button key={n} aria-label={n}><Icon name={n} /></button>)}<Tool icon="matchLayer" label="Match Layer" /></IconRow>
          </Stack>
        </Panel>
        <Panel title="Block" w={161}>
          <BigTool icon="insert" label="Insert" w={43} drop />
          <Stack $w={112}><Tool icon="create" label="Create" /><Tool icon="edit" label="Edit" /><Tool icon="editAttr" label="Edit Attributes" drop /></Stack>
        </Panel>
        <Panel title="Properties" w={265} launcher>
          <BigTool icon="matchProps" label={'Match\nProperties'} w={62} />
          <Stack $w={19}><Tool icon="wheel" /><Tool icon="weights" /><Tool icon="types" /></Stack>
          <Stack $w={180}>
            <IconRow><Combo $w={180}><Swatch $c="#050505" $wide /><select aria-label="Color"><option>ByLayer</option></select><Caret $w={4} /></Combo></IconRow>
            <IconRow><Combo $w={180}><Stroke /><select aria-label="Lineweight"><option>ByLayer</option></select><Caret $w={4} /></Combo></IconRow>
            <IconRow><Combo $w={180}><Stroke /><select aria-label="Linetype"><option>CONTINUOUS</option></select><Caret $w={4} /></Combo></IconRow>
          </Stack>
        </Panel>
        <Panel title="Groups" w={69}>
          <BigTool icon="group" label="Group" w={43} />
          <Stack $w={20}><Tool icon="ungroup" /><Tool icon="groupEdit" /><SelectedTool aria-label="Group selection"><Icon name="groupSel" /></SelectedTool></Stack>
        </Panel>
        <Panel title="Utilities" w={97}>
          <BigTool icon="measure" label="Measure" w={72} drop />
          <Stack $w={20}><Tool icon="quick" /><Tool icon="selectAll" /><Tool icon="calc" /></Stack>
        </Panel>
        <Panel title="Clipboard" w={80} plain>
          <BigTool icon="paste" label="Paste" w={54} drop />
          <Stack $w={20}><Tool icon="cut" /><Tool icon="copyClip" /></Stack>
        </Panel>
        <Panel title="View" w={61} launcher>
          <BigTool icon="base" label="Base" w={59} drop />
        </Panel>
      </Ribbon>

      <DocTabs>
        {docs.map(([t, w], i) => (
          <DocTab key={t} $w={w} $on={i === docs.length - 1}>
            <button>{t}</button>
            {i > 0 && <TabClose aria-label={`Close ${t}`}><svg viewBox="0 0 8 8"><path d="M1 1l6 6M7 1L1 7" stroke="#363636" strokeWidth="1.800" /></svg></TabClose>}
          </DocTab>
        ))}
        <DocTab $w={40} />
      </DocTabs>

      <Canvas>
        <PlanDrawing />
        <ViewButtons>{['vmin', 'vrestore', 'vclose'].map(n => <button key={n} aria-label={n}><Icon name={n} /></button>)}</ViewButtons>
        <NavBar><NavArt /></NavBar>
        <CommandArea>
          <History $wide>{'Autodesk DWG.  This file is a TrustedDWG last saved by an Autodesk application or Autodesk licensed application.'}</History>
          <History>Command:</History>
          <History>Command:</History>
          <CommandBar>
            <Grip><button aria-label="Close command line"><svg width="12" height="12" viewBox="0 0 12 12"><path d="M2 1l8 10M10 1L2 11" stroke="#fff" strokeWidth="2.200" /></svg></button><button aria-label="Customize"><Icon name="wrench" /></button></Grip>
            <Entry><Icon name="prompt" /><Caret $c="#777" /><input aria-label="Command" placeholder="Type a command" /><Up /></Entry>
          </CommandBar>
        </CommandArea>
      </Canvas>
      <StatusEdge />
    </Shell>
  );
}
